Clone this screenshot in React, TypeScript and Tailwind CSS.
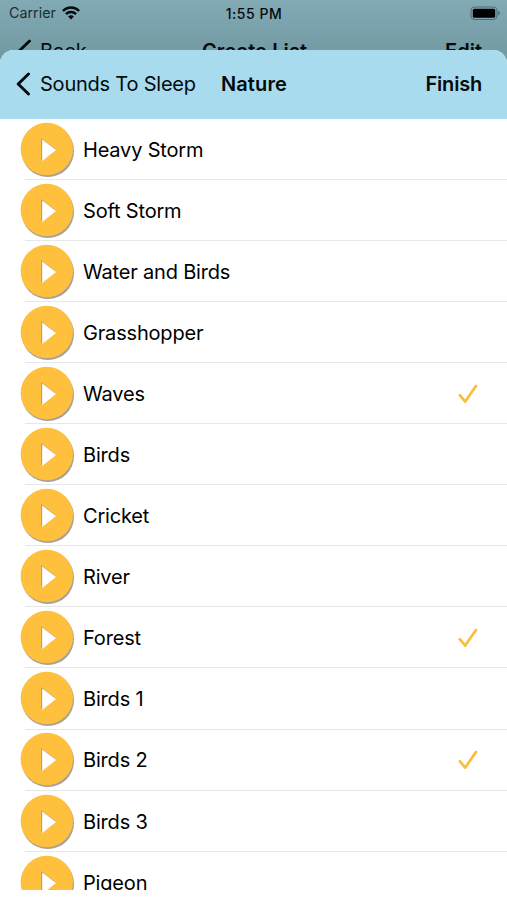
const sounds = [
  { name: "Heavy Storm", selected: false },
  { name: "Soft Storm", selected: false },
  { name: "Water and Birds", selected: false },
  { name: "Grasshopper", selected: false },
  { name: "Waves", selected: true },
  { name: "Birds", selected: false },
  { name: "Cricket", selected: false },
  { name: "River", selected: false },
  { name: "Forest", selected: true },
  { name: "Birds 1", selected: false },
  { name: "Birds 2", selected: true },
  { name: "Birds 3", selected: false },
  { name: "Pigeon", selected: false },
];

function BackIcon() {
  return (
    <svg width="14" height="24" viewBox="0 0 14 24" fill="none" className="shrink-0">
      <path d="M12.5 2 2.2 12 12.5 22" stroke="#050a0c" strokeWidth="2.9" strokeLinecap="round" strokeLinejoin="round" />
    </svg>
  );
}

function WifiIcon() {
  return (
    <svg width="18" height="14" viewBox="0 0 18 14" fill="none" stroke="#050a0c" strokeWidth="2.5">
      <path d="M.9 5C5.4 .3 12.6 .3 17.1 5" />
      <path d="M3.9 8.2c2.9-2.8 7.3-2.8 10.2 0" />
      <path d="M6.1 10.5c1.7-1.6 4.1-1.6 5.8 0L9 13.5Z" fill="#050a0c" stroke="none" />
    </svg>
  );
}

function BatteryIcon() {
  return (
    <svg width="31" height="15" viewBox="0 0 31 15">
      <rect x="1" y="1" width="26" height="12.5" rx="3.8" fill="none" stroke="#4e6a72" strokeWidth="1.1" />
      <rect x="2.8" y="2.7" width="22.4" height="9.1" rx="1.6" fill="#000" />
      <path d="M28.4 5c2 .7 2 3.8 0 4.5Z" fill="#4e6a72" />
    </svg>
  );
}

function PlayButton() {
  return (
    <button className="shrink-0">
      <svg width="56" height="56" viewBox="0 0 56 56" className="block">
        <circle cx="27.8" cy="28.9" r="26.2" fill="#aaa095" />
        <circle cx="26.8" cy="27" r="26.2" fill="#ffc03d" />
        <path d="M21 15.9v22.6L35.4 27Z" fill="#b9a078" />
        <path d="M22.2 17.6v21.4L36 28.1Z" fill="#fff" />
      </svg>
    </button>
  );
}

function CheckIcon() {
  return (
    <svg width="20" height="20" viewBox="0 0 20 20" fill="none">
      <path d="m1.8 11.2 5.4 6.4L18 2" stroke="#fbbd3c" strokeWidth="2.7" strokeLinecap="round" strokeLinejoin="round" />
    </svg>
  );
}

export default function App() {
  return (
    <div className="flex h-[900px] w-[507px] flex-col overflow-hidden bg-white font-['Inter',sans-serif] text-[#050a0c]">
      <header className="h-[70px] shrink-0 bg-linear-to-b from-[#82aab5] to-[#6f969e]">
        <div className="grid h-7 grid-cols-3 items-center pr-[6px] pl-[7px] leading-none">
          <div className="flex items-center gap-[6px] pb-px pl-[2px]">
            <span className="text-[14.3px] text-[#1c2d32]">Carrier</span>
            <WifiIcon />
          </div>
          <span className="text-center text-[14px] font-medium tracking-[0.5px]">1:55 PM</span>
          <div className="flex justify-end pb-[2px]">
            <BatteryIcon />
          </div>
        </div>
        <div className="flex h-[46px] items-center pr-[25px] pl-[17px] text-[20px]">
          <div className="flex w-[185px] items-center gap-[9px]">
            <BackIcon />
            <span>Back</span>
          </div>
          <span className="font-semibold tracking-[0.1px]">Create List</span>
          <span className="ml-auto font-semibold">Edit</span>
        </div>
      </header>

      <main className="relative -mt-5 flex h-[840px] shrink-0 flex-col overflow-hidden rounded-t-[14px] bg-white">
        <nav className="flex h-[69px] shrink-0 items-center bg-[#a8dbee] pr-[25px] pb-px pl-4 text-[20px]">
          <button className="flex w-[205px] items-center gap-[10px] whitespace-nowrap tracking-[-0.22px]">
            <BackIcon />
            <span>Sounds To Sleep</span>
          </button>
          <h1 className="font-semibold tracking-[0.1px]">Nature</h1>
          <button className="ml-auto font-semibold tracking-[-0.2px]">Finish</button>
        </nav>

        <ul className="text-[20px] tracking-[-0.18px] text-black">
          {sounds.map((sound) => (
            <li key={sound.name} className="relative flex h-[61.1px] items-center pr-[29px] pl-5">
              <PlayButton />
              <span className="ml-[7px]">{sound.name}</span>
              {sound.selected && (
                <span className="ml-auto">
                  <CheckIcon />
                </span>
              )}
              <span className="absolute right-0 bottom-[0.4px] left-[25px] h-px bg-[#e7e7e8]" />
            </li>
          ))}
        </ul>
      </main>
    </div>
  );
}
